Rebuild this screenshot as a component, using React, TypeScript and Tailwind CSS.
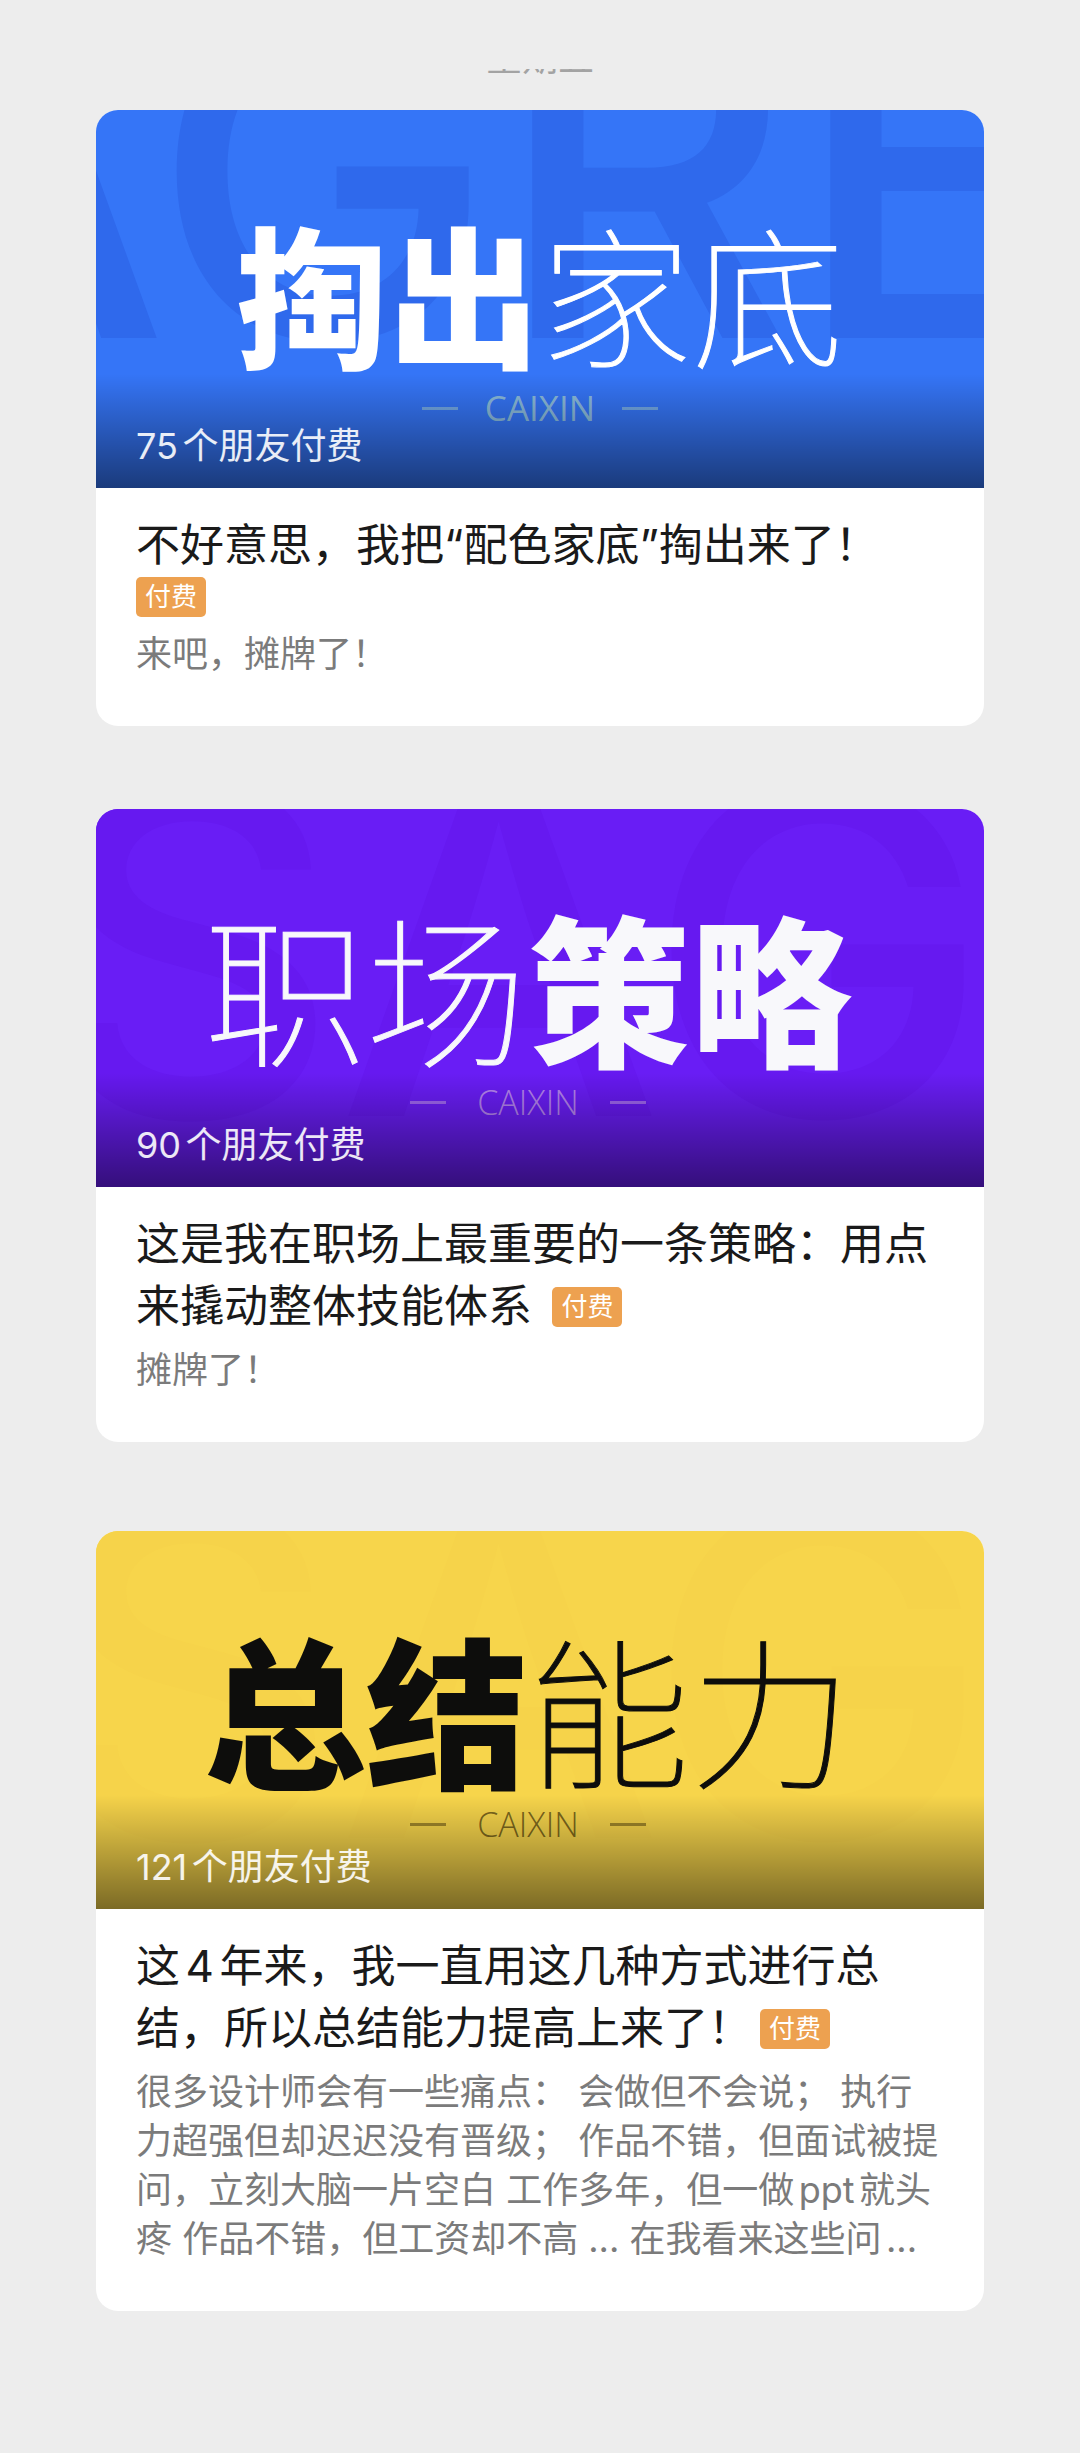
import clsx from 'clsx';

type HeroPart = { text: string; bold: boolean };

type Article = {
  id: string;
  spacing: string;
  cover: string;
  watermark: string;
  watermarkStyle: string;
  heroStyle: string;
  hero: HeroPart[];
  captionStyle: string;
  paidCount: string;
  title: string;
  badgeBelow?: boolean;
  desc: string;
};

const articles: Article[] = [
  {
    id: 'color',
    spacing: 'mt-[35px]',
    cover: 'bg-[#3575f7]',
    watermark: 'AGRE',
    watermarkStyle: 'text-[#2f69ec] -left-[254px] -top-[169px]',
    heroStyle: 'text-[152px] pt-[96px] text-white',
    hero: [
      { text: '掏出', bold: true },
      { text: '家底', bold: false },
    ],
    captionStyle: 'text-[35px] gap-[27px] font-normal text-[#a5d2d8]/80',
    paidCount: '75个朋友付费',
    title: '不好意思，我把“配色家底”掏出来了！',
    badgeBelow: true,
    desc: '来吧，摊牌了！',
  },
  {
    id: 'strategy',
    spacing: 'mt-[83px]',
    cover: 'bg-[#691df5]',
    watermark: 'SAG',
    watermarkStyle: 'text-[#6619f0] -left-[54px] -top-[90px]',
    heroStyle: 'text-[162px] pt-[91px] pr-6 text-[#f8f8fb]',
    hero: [
      { text: '职场', bold: false },
      { text: '策略', bold: true },
    ],
    captionStyle: 'text-[34px] gap-[31px] font-light text-[#c9a0ee]/80',
    paidCount: '90个朋友付费',
    title: '这是我在职场上最重要的一条策略：用点来撬动整体技能体系 ',
    desc: '摊牌了！',
  },
  {
    id: 'summary',
    spacing: 'mt-[89px]',
    cover: 'bg-[#f7d54b]',
    watermark: 'SAG',
    watermarkStyle: 'text-[#f6d34a] -left-[54px] -top-[90px]',
    heroStyle: 'text-[162px] pt-[91px] pr-6 text-[#0d0d0c]',
    hero: [
      { text: '总结', bold: true },
      { text: '能力', bold: false },
    ],
    captionStyle: 'text-[34px] gap-[31px] font-light text-[#5c4a10]/80',
    paidCount: '121个朋友付费',
    title: '这4年来，我一直用这几种方式进行总结，所以总结能力提高上来了！',
    desc: '很多设计师会有一些痛点： 会做但不会说； 执行力超强但却迟迟没有晋级； 作品不错，但面试被提问，立刻大脑一片空白 工作多年，但一做ppt就头疼 作品不错，但工资却不高 ... 在我看来这些问...',
  },
];

const PaidBadge = ({ className }: { className?: string }) => (
  <span
    className={clsx(
      'inline-block h-10 rounded-[5px] bg-[#eda150] px-[9px] text-[26px] leading-10 text-white',
      className,
    )}
  >
    付费
  </span>
);

const Cover = ({ article }: { article: Article }) => (
  <div className={clsx('relative h-[378px] overflow-hidden', article.cover)}>
    <div
      aria-hidden="true"
      className={clsx('absolute text-[460px] leading-none font-medium whitespace-nowrap', article.watermarkStyle)}
    >
      {article.watermark}
    </div>

    <div className={clsx('relative flex flex-col items-center', article.heroStyle)}>
      <div className="flex leading-[192px]">
        {article.hero.map((part) => (
          <span key={part.text} className={part.bold ? 'font-black' : 'font-thin [-webkit-text-stroke:1px]'}>
            {part.text}
          </span>
        ))}
      </div>
      <div
        className={clsx(
          "-mt-[18px] flex items-center font-['Open_Sans',sans-serif] leading-[56px]",
          article.captionStyle,
        )}
      >
        <span className="h-[3px] w-9 bg-current opacity-70" />
        CAIXIN
        <span className="h-[3px] w-9 bg-current opacity-70" />
      </div>
    </div>

    <div className="absolute inset-x-0 bottom-0 flex h-[114px] items-end bg-linear-to-b from-transparent to-black/50 px-10 pb-[18px]">
      <span className="text-[36px] leading-[48px] text-white/90">{article.paidCount}</span>
    </div>
  </div>
);

const ArticleCard = ({ article }: { article: Article }) => (
  <a href={`#${article.id}`} className={clsx('block overflow-hidden rounded-[22px] bg-white', article.spacing)}>
    <Cover article={article} />
    <div className="px-10 pt-[26px] pb-[47px]">
      <h2 className="text-[44px] leading-[62px] text-[#1a1a1a]">
        {article.title}
        {!article.badgeBelow && <PaidBadge className="ml-2 align-[6px]" />}
      </h2>
      {article.badgeBelow && (
        <div className="flex h-[45px] items-start pt-px">
          <PaidBadge />
        </div>
      )}
      <p className="mt-[9px] text-[36px] leading-[49px] text-[#7b7b7b]">{article.desc}</p>
    </div>
  </a>
);

const App = () => {
  return (
    <main
      lang="zh-CN"
      className="min-h-screen bg-[#ededed] px-24 pt-[69px] pb-[140px] font-['Inter','Noto_Sans_CJK_SC',sans-serif] [text-autospace:normal]"
    >
      {/* date label scrolled mostly out of view */}
      <div className="flex h-[6px] items-end justify-center overflow-hidden">
        <time className="text-[36px] leading-[34px] text-[#a3a3a3]">星期五</time>
      </div>
      {articles.map((article) => (
        <ArticleCard key={article.id} article={article} />
      ))}
    </main>
  );
};

export default App;
